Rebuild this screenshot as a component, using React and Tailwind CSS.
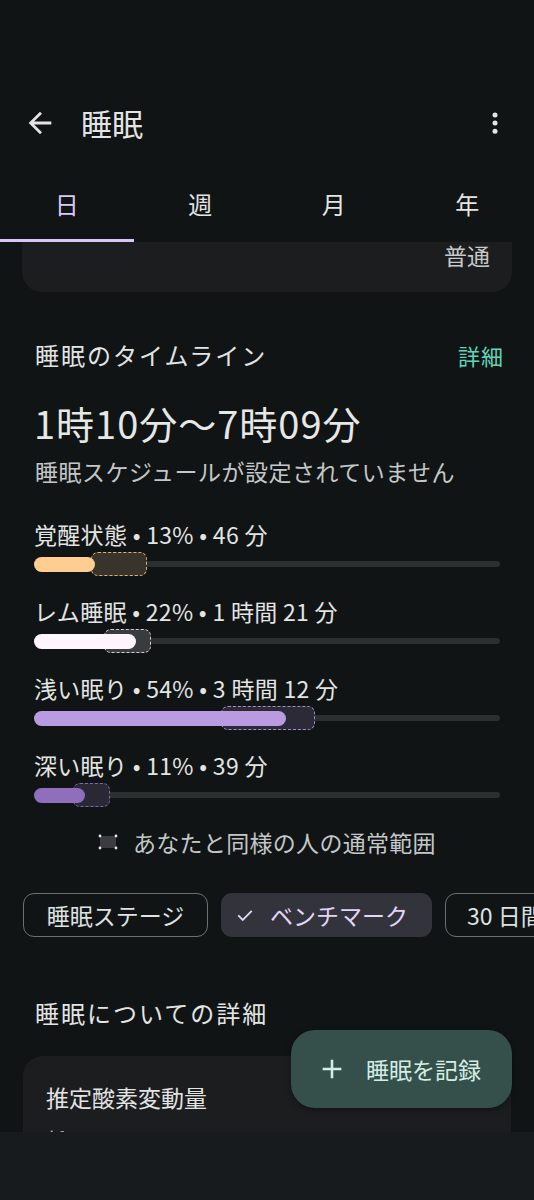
import React from "react";

const FONT = { fontFamily: '"Noto Sans CJK JP", "Noto Sans", sans-serif' };

function StageRow({ label, fillW, fillColor, boxL, boxW, boxBorder, boxBg }) {
  return (
    <div className="flex flex-col">
      <div className="text-[23px] leading-[28px] tracking-[0.3px] text-[#e3e4e4]">{label}</div>
      <div className="relative mt-[4px] h-[24px] w-[466px]">
        <div className="absolute left-0 right-0 top-[9px] h-[6px] rounded-full bg-[#2c2f2f]" />
        <div
          className={`absolute top-0 h-[24px] rounded-[7px] border-[1.5px] border-dashed ${boxBorder} ${boxBg}`}
          style={{ left: boxL, width: boxW }}
        />
        <div
          className={`absolute left-0 top-[4.5px] h-[15px] rounded-full ${fillColor}`}
          style={{ width: fillW }}
        />
      </div>
    </div>
  );
}

export default function App() {
  return (
    <div
      className="relative flex h-[1200px] w-[534px] flex-col overflow-hidden bg-[#101414] text-[#e3e4e4]"
      style={FONT}
    >
      <div className="h-[80px] shrink-0" />
      {/* Header */}
      <div className="flex h-[88px] shrink-0 items-center pb-[3px] pl-[23px] pr-[24px]">
        <svg width="34" height="34" viewBox="0 0 24 24" fill="#e3e4e4">
          <path d="M20 11H7.83l5.59-5.59L12 4l-8 8 8 8 1.41-1.41L7.83 13H20v-2z" />
        </svg>
        <div className="ml-[24px] text-[31px] leading-[40px] text-[#e3e4e4]">睡眠</div>
        <div className="flex-1" />
        <svg width="30" height="30" viewBox="0 0 24 24" fill="#e3e4e4">
          <circle cx="12" cy="5.5" r="2" />
          <circle cx="12" cy="12" r="2" />
          <circle cx="12" cy="18.5" r="2" />
        </svg>
      </div>
      {/* Tabs */}
      <div className="grid h-[74px] shrink-0 grid-cols-4">
        {["日", "週", "月", "年"].map((t, i) => (
          <div key={t} className="relative flex items-center justify-center pb-[2px]">
            <span
              className={`text-[24px] leading-[32px] ${i === 0 ? "text-[#dcc8f8]" : "text-[#e3e4e4]"}`}
            >
              {t}
            </span>
            {i === 0 && <div className="absolute bottom-0 left-0 right-0 h-[3px] bg-[#d9c6f6]" />}
          </div>
        ))}
      </div>
      {/* Scroll content */}
      <div className="flex min-h-0 flex-1 flex-col overflow-hidden">
        <div className="mx-[22px] mt-[-40px] flex h-[90px] shrink-0 items-end justify-end rounded-[20px] bg-[#1c1d1e] pb-[22px] pr-[22px]">
          <span className="text-[23px] leading-[30px] text-[#c6c9c9]">普通</span>
        </div>

        <div className="mt-[48px] flex items-center justify-between pl-[35px] pr-[30px]">
          <span className="text-[24px] leading-[30px] tracking-[2px] text-[#e3e4e4]">睡眠のタイムライン</span>
          <span className="text-[22px] leading-[30px] tracking-[1px] text-[#5fd6b8]">詳細</span>
        </div>

        <div className="mt-[31px] pl-[34px] text-[38px] leading-[44px] tracking-[1px] text-[#e6e7e7]">
          1時10分〜7時09分
        </div>
        <div className="mt-[12px] pl-[35px] text-[23px] leading-[28px] tracking-[0.5px] text-[#c3c7c7]">
          睡眠スケジュールが設定されていません
        </div>

        <div className="mt-[35px] flex flex-col gap-[21px] pl-[34px]">
          <StageRow
            label="覚醒状態 • 13% • 46 分"
            fillW={61}
            fillColor="bg-[#ffcd92]"
            boxL={57}
            boxW={56}
            boxBorder="border-[#d9b27c]"
            boxBg="bg-[#39342b]"
          />
          <StageRow
            label="レム睡眠 • 22% • 1 時間 21 分"
            fillW={102}
            fillColor="bg-[#fff5fc]"
            boxL={70}
            boxW={47}
            boxBorder="border-[#cfcfd2]"
            boxBg="bg-[#3a3b3d]"
          />
          <StageRow
            label="浅い眠り • 54% • 3 時間 12 分"
            fillW={252}
            fillColor="bg-[#b99be2]"
            boxL={187}
            boxW={94}
            boxBorder="border-[#a68dd0]"
            boxBg="bg-[#2c2a36]"
          />
          <StageRow
            label="深い眠り • 11% • 39 分"
            fillW={51}
            fillColor="bg-[#8f6ebb]"
            boxL={39}
            boxW={37}
            boxBorder="border-[#7f68a6]"
            boxBg="bg-[#2b2835]"
          />
        </div>

        <div className="mt-[21px] flex items-center pl-[98px]">
          <svg width="20" height="16" viewBox="0 0 20 16">
            <rect x="2" y="2" width="16" height="12" fill="#3b3b40" />
            <circle cx="2" cy="2" r="1.4" fill="#e8e4f2" />
            <circle cx="18" cy="2" r="1.4" fill="#e8e4f2" />
            <circle cx="2" cy="14" r="1.4" fill="#e8e4f2" />
            <circle cx="18" cy="14" r="1.4" fill="#e8e4f2" />
          </svg>
          <span className="ml-[15px] text-[23px] leading-[28px] tracking-[0.3px] text-[#c3c7c7]">
            あなたと同様の人の通常範囲
          </span>
        </div>

        <div className="mt-[37px] flex shrink-0 gap-[13px] pl-[23px]">
          <div className="flex h-[44px] w-[185px] shrink-0 items-center justify-center rounded-[11px] border border-[#6b6f6f] text-[23px] text-[#dfe2e2]">
            睡眠ステージ
          </div>
          <div className="flex h-[44px] w-[211px] shrink-0 items-center gap-[16px] rounded-[11px] bg-[#33343b] pl-[15px] text-[23px] text-[#e4d5f8]">
            <svg width="18" height="18" viewBox="0 0 24 24" fill="none" stroke="#e4d5f8" strokeWidth="2.4">
              <path d="M3 12.5l6 6L21 6.5" />
            </svg>
            <span>ベンチマーク</span>
          </div>
          <div className="flex h-[44px] w-[150px] shrink-0 items-center rounded-[11px] border border-[#6b6f6f] pl-[21px] text-[23px] text-[#dfe2e2]">
            30 日間
          </div>
        </div>

        <div className="mt-[61px] pl-[35px] text-[24px] leading-[30px] tracking-[2px] text-[#e3e4e4]">
          睡眠についての詳細
        </div>

        <div className="mx-[23px] mt-[28px] flex h-[200px] shrink-0 flex-col rounded-[20px] bg-[#1c1d1e] px-[23px] pt-[26px]">
          <span className="text-[23px] leading-[30px] text-[#e3e4e4]">推定酸素変動量</span>
          <span className="mt-[15px] text-[20px] leading-[26px] text-[#c3c7c7]">低</span>
        </div>
      </div>
      {/* Nav bar */}
      <div className="h-[68px] shrink-0 bg-[#171b1d]" />

      {/* FAB */}
      <div className="absolute left-[291px] top-[1030px] flex h-[78px] w-[221px] items-center rounded-[24px] bg-[#35504a] pl-[27px] shadow-[0_2px_6px_rgba(0,0,0,0.35)]">
        <svg width="28" height="28" viewBox="0 0 24 24" fill="none" stroke="#d3ede4" strokeWidth="2.2">
          <path d="M12 4v16M4 12h16" />
        </svg>
        <span className="ml-[20px] text-[23px] leading-[30px] text-[#d3ede4]">睡眠を記録</span>
      </div>
    </div>
  );
}
